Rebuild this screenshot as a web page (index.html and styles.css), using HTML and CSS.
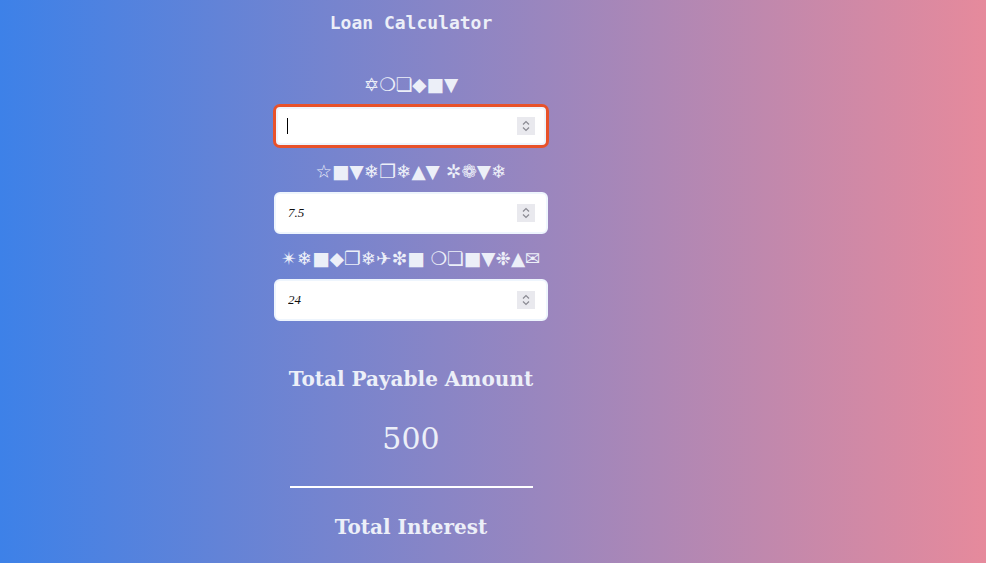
FILE: index.html
```html
<!DOCTYPE html>
<html lang="en">
<head>
<meta charset="utf-8">
<title>Loan Calculator</title>
<link rel="stylesheet" href="styles.css">
</head>
<body>
<main class="page">
  <h1 class="title">Loan Calculator</h1>
  <form class="calc">
    <label class="field">
      <span class="label">✡❍❏◆■▼</span>
      <span class="box">
        <input class="input" type="number" autofocus>
        <span class="caret"></span>
        <span class="spin"><svg width="10" height="14" viewBox="0 0 10 14"><path d="M2 5.5 L5 2.5 L8 5.5 M2 8.5 L5 11.5 L8 8.5" fill="none" stroke="#8a8a92" stroke-width="1.2"/></svg></span>
      </span>
    </label>
    <label class="field">
      <span class="label">☆■▼❄❐❄▲▼ ✲❁▼❄</span>
      <span class="box">
        <input class="input" type="number" value="7.5">
        <span class="spin"><svg width="10" height="14" viewBox="0 0 10 14"><path d="M2 5.5 L5 2.5 L8 5.5 M2 8.5 L5 11.5 L8 8.5" fill="none" stroke="#8a8a92" stroke-width="1.2"/></svg></span>
      </span>
    </label>
    <label class="field">
      <span class="label">✴❄■◆❐❄✈❇■ ❍❏■▼❉▲✉</span>
      <span class="box">
        <input class="input" type="number" value="24">
        <span class="spin"><svg width="10" height="14" viewBox="0 0 10 14"><path d="M2 5.5 L5 2.5 L8 5.5 M2 8.5 L5 11.5 L8 8.5" fill="none" stroke="#8a8a92" stroke-width="1.2"/></svg></span>
      </span>
    </label>
  </form>
  <section class="results">
    <h2 class="res-title">Total Payable Amount</h2>
    <p class="res-value">500</p>
    <hr class="divider">
    <h2 class="res-title">Total Interest</h2>
  </section>
</main>
</body>
</html>
```
FILE: styles.css
```css
html, body {
  margin: 0;
  padding: 0;
  height: 100%;
}
body {
  background: linear-gradient(to right, #3d81e8 0%, #e68a9c 100%);
  color: #eceff8;
  font-family: "DejaVu Serif", serif;
  overflow: hidden;
}
.page {
  width: 274px;
  margin-left: 274px;
  display: flex;
  flex-direction: column;
  align-items: center;
}
.title {
  font-family: "DejaVu Sans Mono", monospace;
  font-weight: bold;
  font-size: 18px;
  margin: 12px 0 0;
  line-height: 22px;
}
.calc {
  width: 100%;
  display: flex;
  flex-direction: column;
  margin-top: 41px;
}
.field {
  display: flex;
  flex-direction: column;
  align-items: center;
  margin-bottom: 15px;
}
.label {
  font-family: "DejaVu Sans", sans-serif;
  font-size: 18.5px;
  line-height: 20px;
  height: 20px;
  margin-bottom: 10px;
  white-space: nowrap;
}
.box {
  position: relative;
  width: 100%;
  display: block;
}
.input {
  box-sizing: border-box;
  display: block;
  width: 100%;
  height: 42px;
  border: 2px solid #eef5fd;
  border-radius: 6px;
  background: #fff;
  padding: 0 10px 0 12px;
  font-family: "Liberation Serif", serif;
  font-style: italic;
  font-size: 13px;
  color: #111;
  outline: none;
  -moz-appearance: textfield;
  caret-color: transparent;
}
.input::-webkit-inner-spin-button,
.input::-webkit-outer-spin-button {
  -webkit-appearance: none;
  margin: 0;
}
.input:focus {
  border-color: #e8522a;
  box-shadow: 0 0 0 1px #e8522a, inset 0 0 0 2px #eef5fd;
}
.caret {
  position: absolute;
  left: 13px;
  top: 13px;
  width: 1px;
  height: 16px;
  background: #000;
}
.spin {
  position: absolute;
  right: 13px;
  top: 12px;
  width: 18px;
  height: 18px;
  background: #e9e9ee;
  display: flex;
  align-items: center;
  justify-content: center;
}
.results {
  width: 100%;
  display: flex;
  flex-direction: column;
  align-items: center;
  margin-top: 30px;
}
.res-title {
  font-family: "DejaVu Serif", serif;
  font-weight: bold;
  font-size: 20px;
  line-height: 26px;
  margin: 0;
}
.res-value {
  font-size: 30px;
  line-height: 36px;
  margin: 29px 0 0;
}
.divider {
  width: 243px;
  border: 0;
  height: 2px;
  background: #fff;
  margin: 29px 0 26px;
}
```
